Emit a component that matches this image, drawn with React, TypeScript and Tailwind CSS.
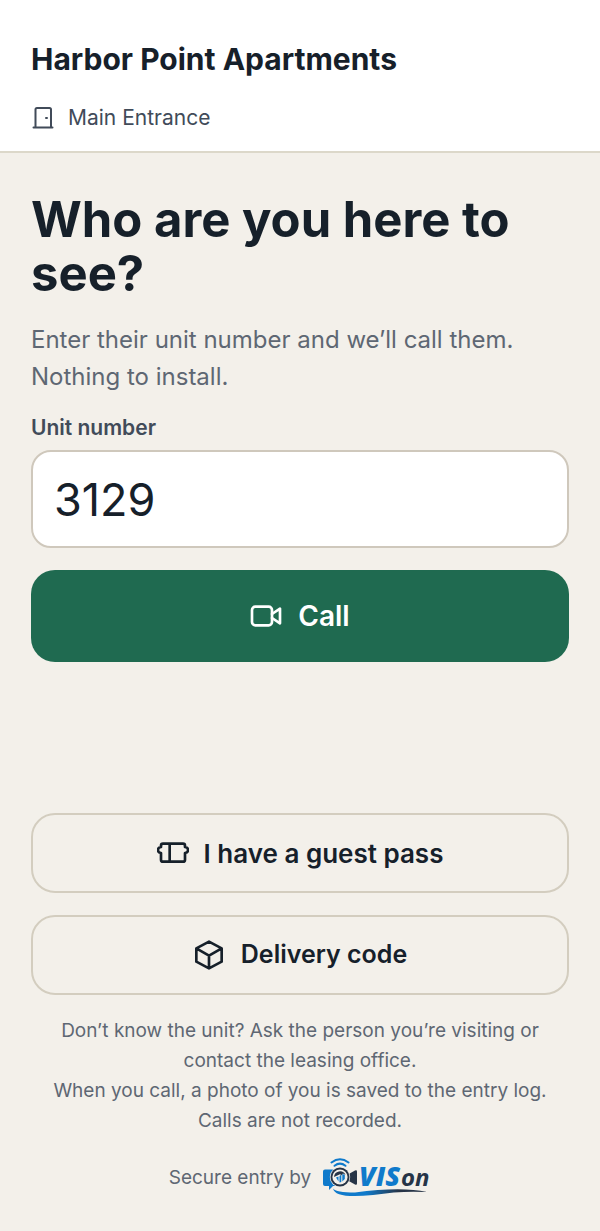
import type { ReactNode } from 'react';

function Icon({ className, children }: { className: string; children: ReactNode }) {
  return (
    <svg viewBox="0 0 24 24" fill="none" stroke="currentColor" strokeLinecap="round" strokeLinejoin="round" className={className} aria-hidden="true">
      {children}
    </svg>
  );
}

function VisonLogo() {
  return (
    <svg viewBox="0 0 108 40" className="h-10 w-[108px] shrink-0" role="img" aria-label="VISon">
      <defs>
        <linearGradient id="swoosh" x1="0" x2="1" y1="0" y2="0">
          <stop offset="0.35" stopColor="#0f7acb" />
          <stop offset="0.7" stopColor="#263447" />
        </linearGradient>
      </defs>
      {/* signal */}
      <g fill="none" stroke="#0f7acb" strokeWidth="2" strokeLinecap="round">
        <path d="M8.500 4.500Q17 -2 25.500 4.500" />
        <path d="M11.500 7.800Q17 3.500 22.500 7.800" />
      </g>
      {/* camera */}
      <path d="M2 11.500h12V28h-4l-4 4v-4H2q-2 0-2-2V13.500q0-2 2-2z" fill="#0f7acb" />
      <path d="M24 17l8-4.500q2-.7 2 1v12q0 1.700-2 1l-8-4.500z" fill="#263447" />
      <circle cx="17" cy="19" r="10.200" fill="#f3f0ea" />
      <circle cx="17" cy="19" r="9.500" fill="#263447" />
      <circle cx="17" cy="19" r="7.600" fill="#f3f0ea" />
      <path d="M11 19a6 6 0 0 1 11.500-2L20 15.500 17.500 18v-2z" fill="#263447" />
      <path d="M13 19.500l2.500-1v5zM16.500 18v6.500l1.800-.5v-7zM19.300 15.800l2.500 1.200v4l-2.500 2.500z" fill="#0f7acb" />
      {/* swoosh */}
      <path d="M10 30.500Q13 34.500 32 34.500Q78 28.500 104 34Q78 32.500 50 37Q12 41 10 30.500z" fill="url(#swoosh)" />
      <text x="36" y="28" fontFamily="Open Sans, sans-serif" fontSize="27" fontWeight="800" fontStyle="italic" fill="#0f7acb">VIS</text>
      <text x="78" y="28" fontFamily="Open Sans, sans-serif" fontSize="24" fontWeight="700" fontStyle="italic" fill="#263447">on</text>
    </svg>
  );
}

const secondaryButton =
  'flex h-20 w-full items-center justify-center rounded-3xl border-2 border-[#d3cdbf] font-semibold text-[#16202a]';

export default function App() {
  return (
    <div className="flex min-h-screen flex-col bg-[#f3f0ea] font-['Inter','Liberation_Sans',sans-serif] text-[#16202a]">
      <header className="border-b-2 border-[#dcd8ca] bg-white px-[31px] pt-10 pb-[17px]">
        <div className="text-[30px] leading-[38px] font-bold">Harbor Point Apartments</div>
        <div className="mt-6 flex items-center gap-[13px] text-[21px] leading-8 text-[#414b59]">
          <Icon className="h-6 w-6">
            <path d="M4.500 21V3.500q0-1.500 1.500-1.500h12.500q1.500 0 1.500 1.500V21M2.500 21.500h19M15 12h1" strokeWidth="2" />
          </Icon>
          Main Entrance
        </div>
      </header>

      <main className="flex grow flex-col px-[31px] pt-10 pb-[33px]">
        <form onSubmit={(e) => e.preventDefault()}>
          <h1 className="text-[49px] leading-[54px] font-bold">Who are you here to see?</h1>
          <p className="mt-5 text-[24px] leading-[37px] text-[#5e6773]">Enter their unit number and we’ll call them. Nothing to install.</p>
          <label htmlFor="unit" className="mt-[17px] block text-[21px] leading-8 font-semibold text-[#414b59]">Unit number</label>
          <input
            id="unit"
            type="text"
            inputMode="numeric"
            defaultValue="3129"
            className="mt-[6px] block h-[98px] w-full rounded-[20px] border-2 border-[#cfc8bc] bg-white px-[21px] text-[45px]"
          />
          <button type="submit" className="mt-[22px] flex h-[92px] w-full items-center justify-center gap-4 rounded-3xl bg-[#1f6a50] text-[28px] font-semibold text-white">
            <Icon className="h-8 w-8">
              <rect x="1.500" y="5" width="15" height="14" rx="2.500" strokeWidth="2" />
              <path d="M16.500 10.500l6-4v11l-6-4" strokeWidth="2" />
            </Icon>
            Call
          </button>
        </form>

        <div className="mt-auto flex flex-col gap-[22px] pt-8">
          <button type="button" className={`${secondaryButton} gap-[15px] text-[26px]`}>
            <Icon className="h-8 w-8">
              <path d="M4.500 5h15q1.500 0 1.500 1.500v1q2.300.3 2.300 2.200t-2.300 2.300v5q0 1.500-1.500 1.500h-15Q3 18.500 3 17v-5Q.7 11.600.7 9.700t2.300-2.200v-1Q3 5 4.500 5zM9.500 5v13.500" strokeWidth="2" />
            </Icon>
            I have a guest pass
          </button>
          <button type="button" className={`${secondaryButton} gap-4 text-[25px]`}>
            <Icon className="h-8 w-8">
              <path d="M12 2l9.500 5v10L12 22l-9.500-5V7zM2.500 7l9.500 5.500L21.500 7M12 12.500V22" strokeWidth="2" />
            </Icon>
            Delivery code
          </button>
        </div>

        <div className="mt-[21px] text-center text-[19px] leading-[30px] text-[#5e6773]">
          <p>Don’t know the unit? Ask the person you’re visiting or contact the leasing office.</p>
          <p>When you call, a photo of you is saved to the entry log. Calls are not recorded.</p>
        </div>
        <div className="mt-[22px] flex items-center justify-center gap-3 text-[19px] text-[#5e6773]">
          Secure entry by
          <VisonLogo />
        </div>
      </main>
    </div>
  );
}
